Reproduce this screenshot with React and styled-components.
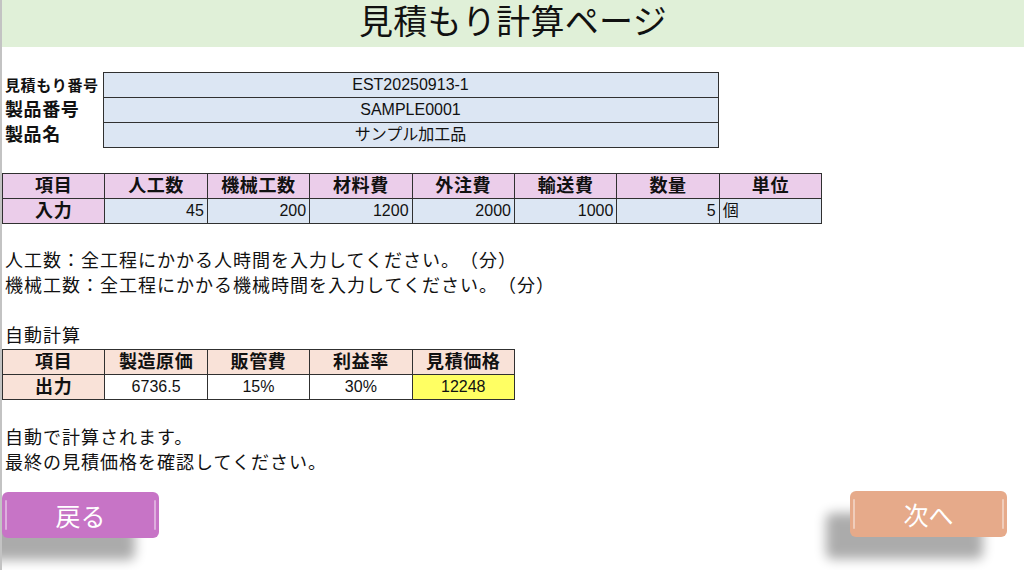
import React from "react";
import styled, { createGlobalStyle } from "styled-components";

const Global = createGlobalStyle`
  html, body { margin: 0; padding: 0; background: #fff; }
  body {
    font-family: "Liberation Sans", "Noto Sans CJK JP", sans-serif;
    color: #111;
    text-spacing-trim: space-all;
  }
  * { box-sizing: border-box; }
`;

const Page = styled.div`
  width: 1024px;
  height: 570px;
  overflow: hidden;
  border-left: 2px solid #c3c3c3;
  display: flex;
  flex-direction: column;
`;

const Header = styled.header`
  height: 47px;
  background: #e0f0d8;
  display: flex;
  align-items: center;
  justify-content: center;
`;

const Title = styled.h1`
  margin: 0;
  font-size: 34px;
  font-weight: 400;
  letter-spacing: 0.3px;
  line-height: 1;
  padding-bottom: 4px;
`;

const Table = styled.table`
  border-collapse: collapse;
  table-layout: fixed;
  margin-top: ${(p) => p.$mt || 0}px;
  width: ${(p) => p.$w}px;
`;

const Cell = styled.td`
  height: 25px;
  padding: 0 3px;
  border: ${(p) => (p.$noBorder ? "none" : "1px solid #303030")};
  background: ${(p) => p.$bg || "transparent"};
  text-align: ${(p) => p.$align || "center"};
  font-size: ${(p) => p.$size || 16}px;
  font-weight: ${(p) => (p.$bold ? 700 : 400)};
  letter-spacing: ${(p) => (p.$bold ? "0.6px" : "0")};
  line-height: 1;
  white-space: nowrap;
  overflow: hidden;
  vertical-align: middle;
`;

const Notes = styled.div`
  margin-top: ${(p) => p.$mt || 0}px;
  padding-left: 3px;
  font-size: 18px;
  letter-spacing: 1px;
  line-height: 25px;
  white-space: nowrap;
`;

const ButtonRow = styled.div`
  display: flex;
  justify-content: space-between;
  align-items: flex-start;
  margin-top: ${(p) => p.$mt}px;
  padding-right: 17px;
`;

const Button = styled.button`
  position: relative;
  width: 157px;
  height: 46px;
  margin-top: ${(p) => p.$mt || 0}px;
  border: none;
  border-radius: 6px;
  background: ${(p) => p.$bg};
  color: #fff;
  font-family: "Noto Sans CJK JP", sans-serif;
  font-size: 25px;
  font-weight: 400;
  box-shadow: -24px 22px 12px rgba(0, 0, 0, 0.33);
  cursor: pointer;
  &::before, &::after {
    content: "";
    position: absolute;
    top: 8px;
    bottom: 8px;
    width: 2px;
    border-radius: 1px;
    background: rgba(255, 255, 255, 0.42);
  }
  &::before { left: 3px; }
  &::after { right: 3px; }
`;

const PINK = "#ebcdea";
const BLUE = "#dce6f3";
const PEACH = "#f9e2d8";
const YELLOW = "#ffff63";

const inputHeads = ["人工数", "機械工数", "材料費", "外注費", "輸送費", "数量", "単位"];
const inputVals = ["45", "200", "1200", "2000", "1000", "5"];
const outHeads = ["製造原価", "販管費", "利益率", "見積価格"];
const outVals = ["6736.5", "15%", "30%", "12248"];

export default function App() {
  const colW = 102.4;
  return (
    <>
      <Global />
      <Page>
        <Header>
          <Title>見積もり計算ページ</Title>
        </Header>

        <Table $w={716} $mt={25}>
          <colgroup>
            <col style={{ width: 101 }} />
            <col style={{ width: 615 }} />
          </colgroup>
          <tbody>
            <tr>
              <Cell $noBorder $align="left" $size={15} $bold>見積もり番号</Cell>
              <Cell $bg={BLUE}>EST20250913-1</Cell>
            </tr>
            <tr>
              <Cell $noBorder $align="left" $size={18} $bold>製品番号</Cell>
              <Cell $bg={BLUE}>SAMPLE0001</Cell>
            </tr>
            <tr>
              <Cell $noBorder $align="left" $size={18} $bold>製品名</Cell>
              <Cell $bg={BLUE}>サンプル加工品</Cell>
            </tr>
          </tbody>
        </Table>

        <Table $w={819} $mt={25}>
          <colgroup>
            {Array.from({ length: 8 }).map((_, i) => (
              <col key={i} style={{ width: colW }} />
            ))}
          </colgroup>
          <tbody>
            <tr>
              <Cell $bg={PINK} $bold $size={18}>項目</Cell>
              {inputHeads.map((h) => (
                <Cell key={h} $bg={PINK} $bold $size={18}>{h}</Cell>
              ))}
            </tr>
            <tr>
              <Cell $bg={PINK} $bold $size={18}>入力</Cell>
              {inputVals.map((v, i) => (
                <Cell key={i} $bg={BLUE} $align="right">{v}</Cell>
              ))}
              <Cell $bg={BLUE} $align="left">個</Cell>
            </tr>
          </tbody>
        </Table>

        <Notes $mt={25}>
          <div>人工数：全工程にかかる人時間を入力してください。（分）</div>
          <div>機械工数：全工程にかかる機械時間を入力してください。（分）</div>
          <div>&nbsp;</div>
          <div>自動計算</div>
        </Notes>

        <Table $w={511}>
          <colgroup>
            {Array.from({ length: 5 }).map((_, i) => (
              <col key={i} style={{ width: colW }} />
            ))}
          </colgroup>
          <tbody>
            <tr>
              <Cell $bg={PEACH} $bold $size={18}>項目</Cell>
              {outHeads.map((h) => (
                <Cell key={h} $bg={PEACH} $bold $size={18}>{h}</Cell>
              ))}
            </tr>
            <tr>
              <Cell $bg={PEACH} $bold $size={18}>出力</Cell>
              {outVals.map((v, i) => (
                <Cell key={i} $bg={i === 3 ? YELLOW : "#fff"}>{v}</Cell>
              ))}
            </tr>
          </tbody>
        </Table>

        <Notes $mt={26}>
          <div>自動で計算されます。</div>
          <div>最終の見積価格を確認してください。</div>
        </Notes>

        <ButtonRow $mt={15}>
          <Button $bg="#c774c6" $mt={1}>戻る</Button>
          <Button $bg="#e6aa8a">次へ</Button>
        </ButtonRow>
      </Page>
    </>
  );
}
